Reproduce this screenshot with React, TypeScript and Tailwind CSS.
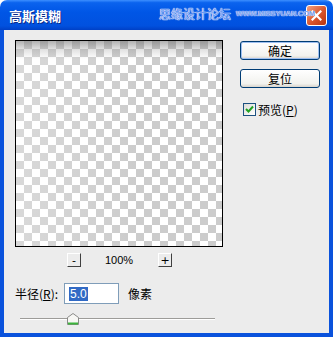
export default function App() {
  return (
    <div className="w-[333px] h-[337px] bg-white overflow-hidden font-['Noto_Sans_CJK_SC',sans-serif]">
      <div className="w-full h-full flex flex-col rounded-t-[7px] overflow-hidden">
        {/* Title bar */}
        <div className="relative h-[30px] shrink-0 flex items-center pl-[9px] pr-[6px] bg-[linear-gradient(to_bottom,#3d8fff_0%,#0b63ee_9%,#0056e6_40%,#0151df_86%,#0040c6_100%)]">
          <span className="text-white text-[13px] font-bold leading-none [text-shadow:1px_1px_0_#0a2a8a]">高斯模糊</span>
          <div className="flex-1" />
          <div className="w-[21px] h-[21px] rounded-[3px] border border-white bg-[linear-gradient(135deg,#f0a080,#d8542c_55%,#b83410)] flex items-center justify-center">
            <svg width="11" height="11" viewBox="0 0 11 11">
              <path d="M1.5 1.5 L9.5 9.5 M9.5 1.5 L1.5 9.5" stroke="#fff" strokeWidth="2.2" strokeLinecap="square" />
            </svg>
          </div>
          <div className="absolute z-10 left-[159px] top-[8px] flex items-center gap-[5px] whitespace-nowrap pointer-events-none">
            <span className="text-[12px] leading-none text-[#6b98f2] [text-shadow:0_0_1px_#fff,0_0_1px_#fff,0_0_1px_#fff]">思缘设计论坛</span>
            <span className="text-[7.5px] font-bold leading-none tracking-[-0.2px] text-[#6d9af0] font-['Liberation_Sans',sans-serif] [text-shadow:0_0_1px_#fff,0_0_1px_#fff]">WWW.MISSYUAN.COM</span>
          </div>
        </div>

        {/* Body */}
        <div className="flex-1 flex border-x-4 border-b-4 border-[#0a52dc] bg-[#ececec]">
          {/* Left column */}
          <div className="flex flex-col ml-[11px] mt-[10px] w-[208px]">
            <div className="w-[208px] h-[207px] border border-black bg-[linear-gradient(to_bottom,rgba(100,100,100,0.5),rgba(130,130,130,0.25)_8px,rgba(150,150,150,0)_18px),linear-gradient(to_right,rgba(255,255,255,0.25),rgba(255,255,255,0)_60%),conic-gradient(#cccccc_25%,#ffffff_0_50%,#cccccc_0_75%,#ffffff_0)] bg-[length:100%_100%,100%_100%,16px_16px]" />

            <div className="mt-[6px] h-[14px] flex items-center">
              <div className="ml-[52px] w-[14px] h-[14px] border-t border-l border-white border-r border-b border-r-[#404040] border-b-[#404040] flex items-center justify-center text-[11px] leading-none text-black font-['DejaVu_Sans',sans-serif]">-</div>
              <span className="ml-[24px] text-[11px] leading-none text-black font-['Liberation_Sans',sans-serif]">100%</span>
              <div className="ml-[25px] w-[14px] h-[14px] border-t border-l border-white border-r border-b border-r-[#404040] border-b-[#404040] flex items-center justify-center text-[11px] leading-none text-black font-['DejaVu_Sans',sans-serif]">+</div>
            </div>

            <div className="mt-[16px] h-[21px] flex items-center">
              <span className="w-[49px] text-[12px] leading-none text-black">
                半径(<span className="underline">R</span>):
              </span>
              <div className="w-[55px] h-[21px] border border-[#7f9db9] bg-white flex items-center pl-[4px]">
                <span className="bg-[#316ac5] text-white text-[12px] leading-[14px] px-[1px] font-['Liberation_Sans',sans-serif]">5.0</span>
              </div>
              <span className="ml-[9px] text-[12px] leading-none text-black">像素</span>
            </div>

            <div className="mt-[9px] h-[12px] relative ml-[5px] w-[195px]">
              <div className="absolute left-0 right-0 top-[5px] h-[2px] border-t border-[#9d9c99] bg-white" />
              <svg className="absolute left-[47px] top-0" width="12" height="12" viewBox="0 0 12 12">
                <path d="M0.5 4.5 L6 0.5 L11.5 4.5 L11.5 11.5 L0.5 11.5 Z" fill="#f7f7f4" stroke="#8a8a88" />
                <path d="M1 10.5 L11 10.5" stroke="#3cb43c" strokeWidth="2" />
              </svg>
            </div>
          </div>

          {/* Right column */}
          <div className="flex flex-col ml-[17px] mt-[11px]">
            <button className="w-[80px] h-[19px] rounded-[3px] border border-[#003c74] bg-[linear-gradient(to_bottom,#ffffff,#f2f2ee_80%,#d8d4cc)] shadow-[inset_0_0_0_1px_#9ebff0] text-[12px] leading-none text-black flex items-center justify-center">确定</button>
            <button className="mt-[9px] w-[80px] h-[19px] rounded-[3px] border border-[#003c74] bg-[linear-gradient(to_bottom,#ffffff,#f2f2ee_80%,#d8d4cc)] text-[12px] leading-none text-black flex items-center justify-center">复位</button>
            <div className="mt-[15px] ml-[3px] flex items-center gap-[2px]">
              <div className="w-[13px] h-[13px] border border-[#1c5180] bg-[linear-gradient(135deg,#dcdcd7,#ffffff)] flex items-center justify-center">
                <svg width="9" height="9" viewBox="0 0 9 9">
                  <path d="M1 4 L3.5 6.5 L8 1.5" fill="none" stroke="#21a121" strokeWidth="2" />
                </svg>
              </div>
              <span className="text-[12px] leading-none text-black">
                预览(<span className="underline">P</span>)
              </span>
            </div>
          </div>
        </div>
      </div>
    </div>
  );
}
